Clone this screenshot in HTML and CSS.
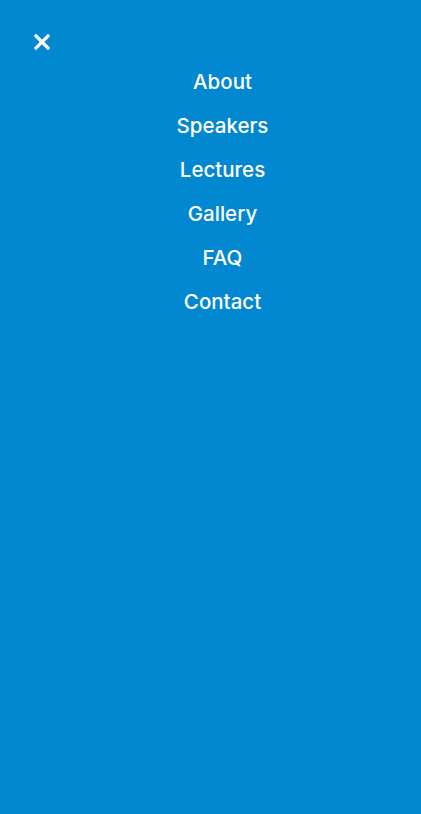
FILE: index.html
```html
<!DOCTYPE html>
<html>
<head>
<meta charset="utf-8">
<link rel="stylesheet" href="styles.css">
</head>
<body>
<div class="menu">
  <button class="close" aria-label="Close">
    <svg width="16" height="16" viewBox="0 0 16 16"><path d="M2 2 L14 14 M14 2 L2 14" stroke="#fff" stroke-width="3.2" stroke-linecap="square"/></svg>
  </button>
  <nav class="nav">
    <a href="#">About</a>
    <a href="#">Speakers</a>
    <a href="#">Lectures</a>
    <a href="#">Gallery</a>
    <a href="#">FAQ</a>
    <a href="#">Contact</a>
  </nav>
</div>
</body>
</html>
```
FILE: styles.css
```css
html, body {
  margin: 0;
  height: 100%;
  background: #0288d1;
}
.menu {
  height: 100%;
  padding: 34px 0 0 0;
  box-sizing: border-box;
  font-family: Inter, "Noto Sans", sans-serif;
}
.close {
  display: block;
  margin-left: 34px;
  padding: 0;
  border: 0;
  background: none;
  width: 16px;
  height: 16px;
}
.close svg { display: block; }
.nav {
  display: flex;
  flex-direction: column;
  align-items: center;
  padding-left: 24px;
  margin-top: 10px;
}
.nav a {
  color: #fff;
  text-decoration: none;
  font-size: 20.5px;
  font-weight: 500;
  line-height: 44px;
}
```
